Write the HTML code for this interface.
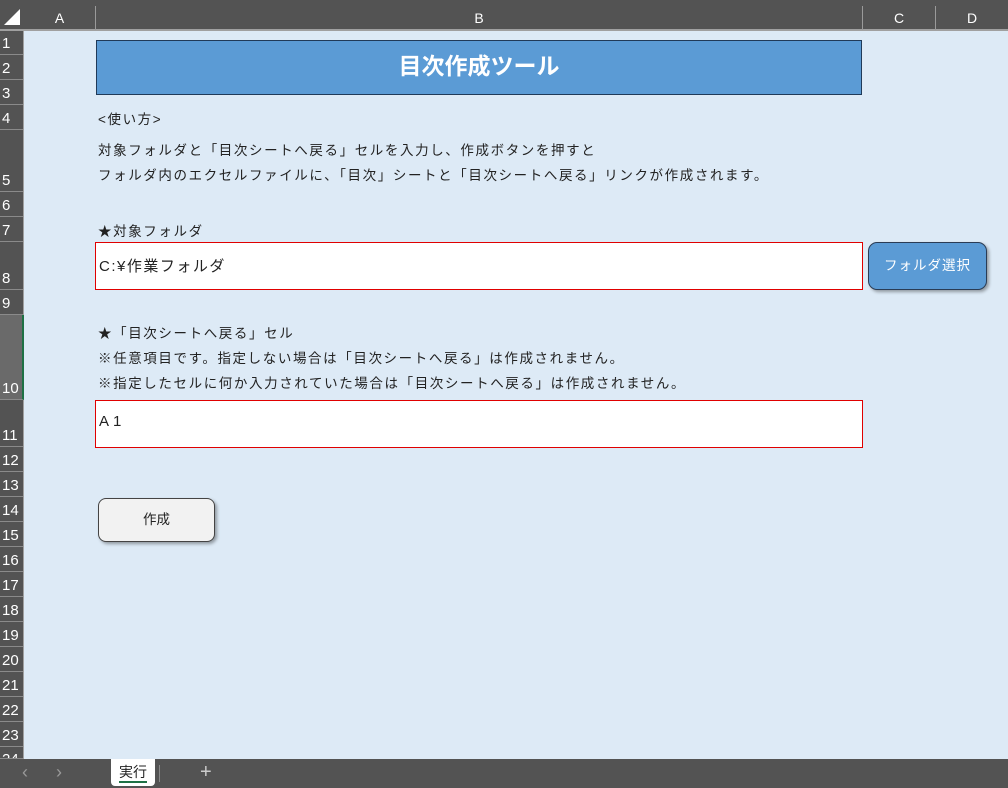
<!DOCTYPE html>
<html><head><meta charset="utf-8"><style>
*{margin:0;padding:0;box-sizing:border-box}
body{width:1008px;height:788px;overflow:hidden;background:#ddeaf6;font-family:"Liberation Sans","Noto Sans CJK JP",sans-serif;position:relative}
.a{position:absolute}
.hdr{background:#535353;color:#fff}
.rh{position:absolute;left:0;width:23px;background:#535353;color:#fff;font-size:15px;border-bottom:1px solid #8a8a8a;display:flex;align-items:flex-end;padding-left:2px;padding-bottom:3px;line-height:1}
.ch{position:absolute;top:6px;height:24px;border-left:1px solid #9a9a9a;color:#fff;font-size:14px;text-align:center;line-height:24px}
.t{position:absolute;font-size:13.5px;color:#222;white-space:nowrap;letter-spacing:1.6px}
</style></head><body>
<div class="a hdr" style="left:0;top:0;width:1008px;height:31px;border-bottom:2px solid #a0a0a0"></div>
<svg class="a" style="left:4px;top:9px" width="17" height="17"><polygon points="16,0 16,16 0,16" fill="#fff"/></svg>
<div class="ch" style="left:24px;width:71px;border-left:none">A</div>
<div class="ch" style="left:95px;width:767px">B</div>
<div class="ch" style="left:862px;width:73px">C</div>
<div class="ch" style="left:935px;width:73px">D</div>
<div class="a" style="left:0;top:31px;width:24px;height:728px;background:#535353;border-right:1px solid #a0a0a0"></div>
<div class="rh" style="top:31px;height:24px">1</div>
<div class="rh" style="top:55px;height:25px">2</div>
<div class="rh" style="top:80px;height:25px">3</div>
<div class="rh" style="top:105px;height:25px">4</div>
<div class="rh" style="top:130px;height:62px">5</div>
<div class="rh" style="top:192px;height:25px">6</div>
<div class="rh" style="top:217px;height:25px">7</div>
<div class="rh" style="top:242px;height:48px">8</div>
<div class="rh" style="top:290px;height:25px">9</div>
<div class="rh" style="top:315px;height:85px;background:#6a6a6a;border-right:2px solid #1e7145;width:24px">10</div>
<div class="rh" style="top:400px;height:47px">11</div>
<div class="rh" style="top:447px;height:25px">12</div>
<div class="rh" style="top:472px;height:25px">13</div>
<div class="rh" style="top:497px;height:25px">14</div>
<div class="rh" style="top:522px;height:25px">15</div>
<div class="rh" style="top:547px;height:25px">16</div>
<div class="rh" style="top:572px;height:25px">17</div>
<div class="rh" style="top:597px;height:25px">18</div>
<div class="rh" style="top:622px;height:25px">19</div>
<div class="rh" style="top:647px;height:25px">20</div>
<div class="rh" style="top:672px;height:25px">21</div>
<div class="rh" style="top:697px;height:25px">22</div>
<div class="rh" style="top:722px;height:25px">23</div>
<div class="rh" style="top:747px;height:12px;overflow:hidden;align-items:flex-start;padding-top:5px">24</div>

<div class="a" style="left:96px;top:40px;width:766px;height:55px;background:#5b9bd5;border:1px solid #203a58;color:#fff;font-weight:bold;font-size:23px;text-align:center;line-height:51px">目次作成ツール</div>
<div class="t" style="left:98px;top:108px">&lt;使い方&gt;</div>
<div class="t" style="left:98px;top:139px">対象フォルダと「目次シートへ戻る」セルを入力し、作成ボタンを押すと</div>
<div class="t" style="left:98px;top:164px">フォルダ内のエクセルファイルに、「目次」シートと「目次シートへ戻る」リンクが作成されます。</div>
<div class="t" style="left:98px;top:220px">★対象フォルダ</div>
<div class="a" style="left:95px;top:242px;width:768px;height:48px;background:#fff;border:1px solid #e00000"></div>
<div class="t" style="left:99px;top:255px;font-size:15px;letter-spacing:1.5px">C:¥作業フォルダ</div>
<div class="a" style="left:868px;top:242px;width:119px;height:48px;background:#5b9bd5;border:1px solid #2a3c55;border-radius:9px;box-shadow:2px 2px 3px rgba(0,0,0,.35);color:#fff;font-size:13.5px;text-align:center;line-height:45px;letter-spacing:1px">フォルダ選択</div>
<div class="t" style="left:98px;top:322px">★「目次シートへ戻る」セル</div>
<div class="t" style="left:98px;top:347px">※任意項目です。指定しない場合は「目次シートへ戻る」は作成されません。</div>
<div class="t" style="left:98px;top:372px">※指定したセルに何か入力されていた場合は「目次シートへ戻る」は作成されません。</div>
<div class="a" style="left:95px;top:400px;width:768px;height:48px;background:#fff;border:1px solid #e00000"></div>
<div class="t" style="left:99px;top:413px;font-size:15px;letter-spacing:4px">A1</div>
<div class="a" style="left:98px;top:498px;width:117px;height:44px;background:#f2f2f2;border:1px solid #444;border-radius:8px;box-shadow:2px 2px 3px rgba(0,0,0,.35);font-size:13.5px;color:#222;text-align:center;line-height:41px">作成</div>

<div class="a" style="left:0;top:759px;width:1008px;height:29px;background:#535353"></div>
<div class="a" style="left:22px;top:762px;color:#999;font-size:18px">‹</div>
<div class="a" style="left:56px;top:762px;color:#999;font-size:18px">›</div>
<div class="a" style="left:111px;top:759px;width:44px;height:27px;background:#fff;border-radius:0 0 4px 4px;font-size:14px;color:#222;text-align:center;line-height:26px">実行</div>
<div class="a" style="left:119px;top:781px;width:28px;height:2px;background:#1e7145"></div>
<div class="a" style="left:159px;top:765px;width:1px;height:17px;background:#888"></div>
<div class="a" style="left:200px;top:761px;color:#ccc;font-size:20px">+</div>
</body></html>
